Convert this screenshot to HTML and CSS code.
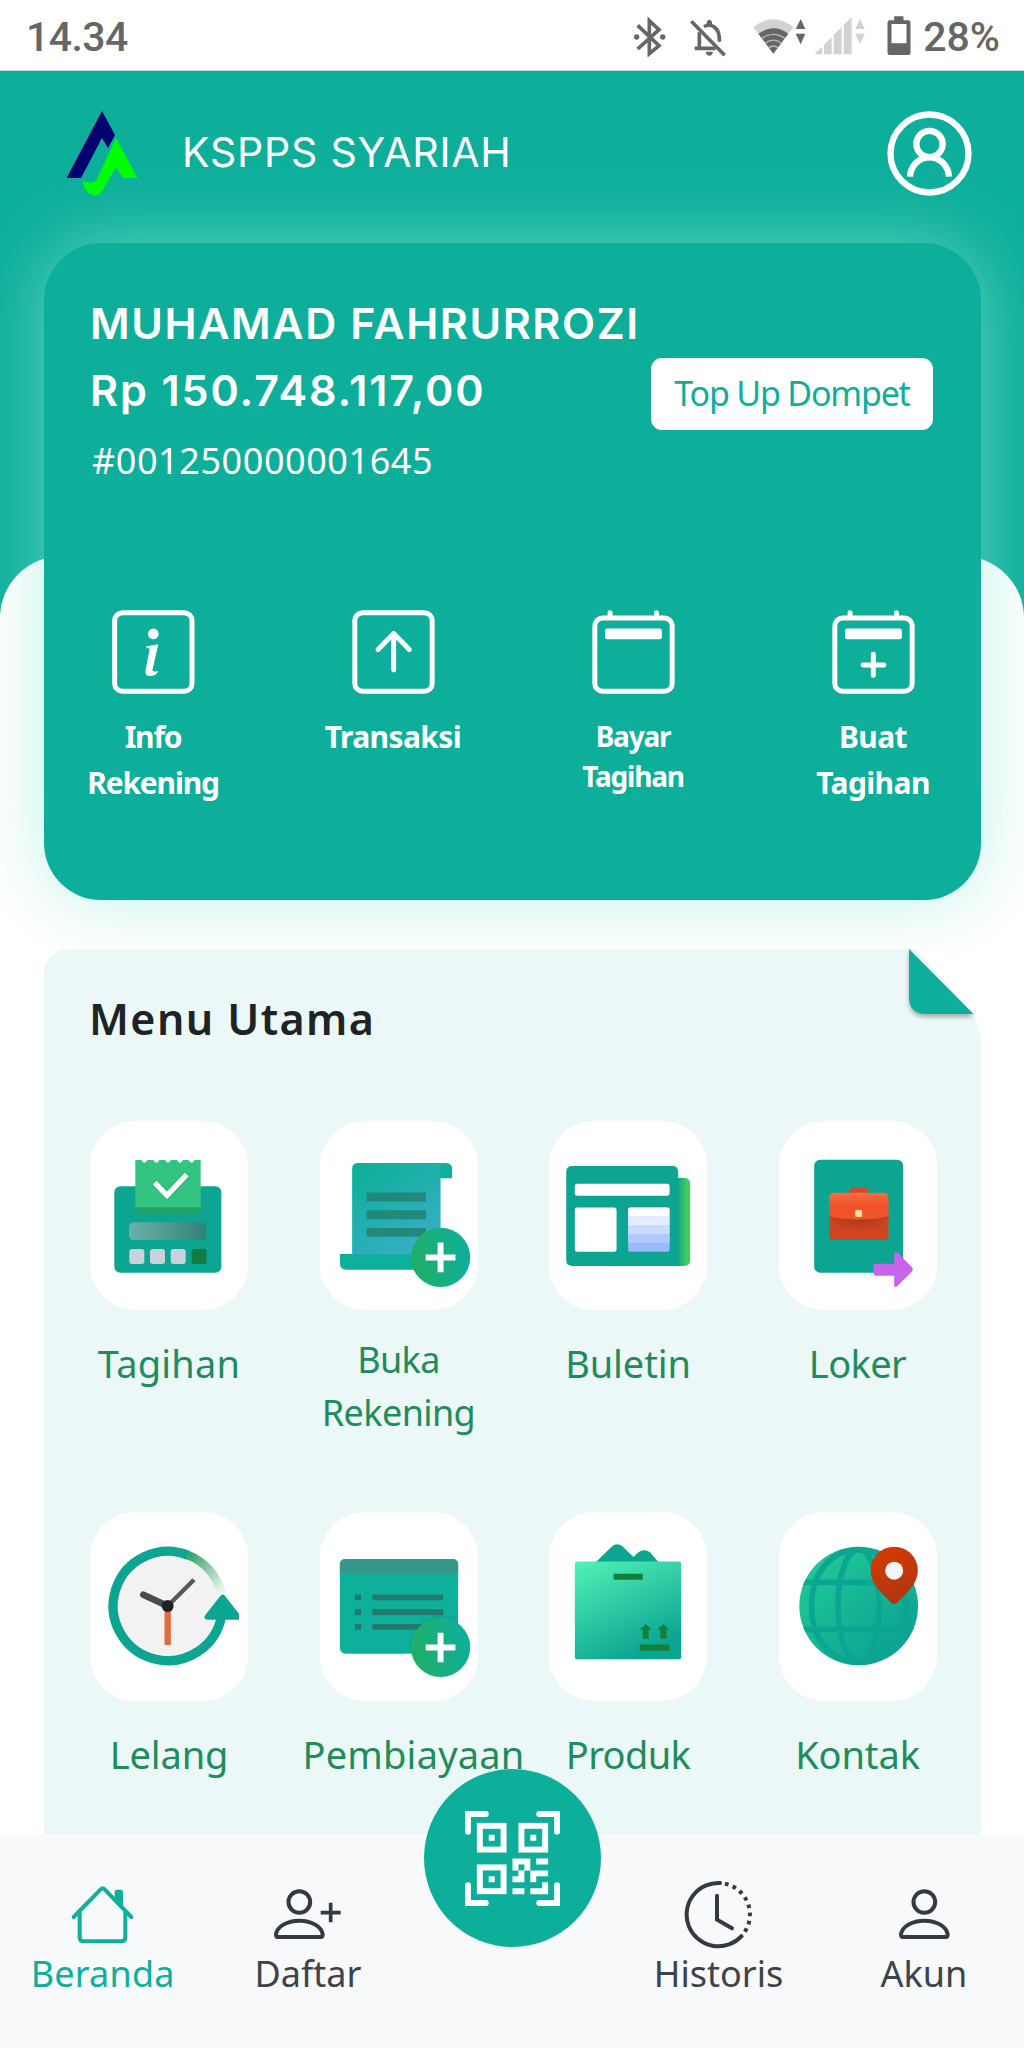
FILE: index.html
```html
<!DOCTYPE html>
<html lang="id">
<head>
<meta charset="utf-8">
<title>KSPPS Syariah</title>
<link rel="stylesheet" href="styles.css">
</head>
<body>
<div class="app">
  <div class="statusbar">
    <span class="clock">14.34</span>
    <div class="status-icons">
      <svg class="i-bt" viewBox="102 45 99 123" fill="none" stroke="#666" stroke-width="11"><path d="M116 73L180 134L151 158V59L180 86L116 144"/><g fill="#666" stroke="none"><circle cx="113" cy="108" r="8"/><circle cx="191" cy="108" r="8"/></g></svg>
      <svg class="i-bell" viewBox="270 45 114 123"><g fill="none" stroke="#666" stroke-width="11"><path d="M277 61L377 163"/><path d="M301 94V142M287 142H350" /><path d="M315 77Q331 68 346 78Q361 90 361 112V122"/></g><path d="M323 72V62Q331 50 339 62V72ZM320 152H342Q340 164 331 164Q322 164 320 152Z" fill="#666"/></svg>
      <svg class="i-wifi" viewBox="462 45 159 123"><path d="M523 158L463 78Q523 32 583 78Z" fill="#d2d2d2"/><path d="M523 158L478 98Q523 66 568 98Z" fill="#666"/><path d="M488 112Q523 88 558 112M499 127Q523 108 547 127M509 140Q523 130 537 140" fill="none" stroke="#bbb" stroke-width="4"/><path d="M605 54L619 84H590ZM605 130L619 98H590Z" fill="#666"/></svg>
      <svg class="i-cell" viewBox="646 45 153 123" fill="#d2d2d2"><path d="M647 160L670 138V160ZM676 132L699 108V160H676ZM705 102L729 78V160H705ZM735 72L759 49V160H735ZM784 54L798 84H770ZM784 130L798 98H770Z"/></svg>
      <svg class="i-batt" viewBox="866 45 71 123"><path d="M887 46H915V58H929Q936 58 936 65V154Q936 162 929 162H874Q867 162 867 154V65Q867 58 874 58H887ZM879 69V127H924V69Z" fill="#666" fill-rule="evenodd"/></svg>
    </div>
    <span class="battery">28%</span>
  </div>

  <div class="backdrop"></div>

  <header class="header">
    <svg class="logo" viewBox="66 110 72 86"><path d="M102 111L115 135L108 148L102 138L81 178H66.600Z" fill="#000070"/><path d="M116 138L137.500 178H123L116 167L104 188Q100 195.500 95.500 195.500Q89 195.500 85 189L82.500 182H88Q94 184 97 179Z" fill="#00ff00"/></svg>
    <h1 class="brand">KSPPS SYARIAH</h1>
    <svg class="profile" viewBox="861 331 255 255" fill="none" stroke="#fff" stroke-width="19"><circle cx="988.500" cy="458.500" r="117"/><circle cx="988.500" cy="430" r="39.500"/><path d="M930 528C932 496 956 470 988.500 470S1045 496 1047 528"/></svg>
  </header>

  <section class="card">
    <div class="account">
      <div class="account-info">
        <div class="owner">MUHAMAD FAHRURROZI</div>
        <div class="balance">Rp 150.748.117,00</div>
        <div class="number">#001250000001645</div>
      </div>
      <button class="topup">Top Up Dompet</button>
    </div>
    <nav class="actions">
      <a class="action">
        <svg viewBox="153 90 249 253"><rect x="160.500" y="98" width="233" height="237" rx="24" fill="none" stroke="#fff" stroke-width="15"/><circle cx="277" cy="162" r="16" fill="#fff"/><path d="M256 199L292 193L274 272Q281 278 292 274Q286 290 264 289Q250 287 254 270L266 207Q262 204 256 205Z" fill="#fff"/></svg>
        <span>Info<br>Rekening</span>
      </a>
      <a class="action">
        <svg viewBox="873 90 249 253" fill="none" stroke="#fff" stroke-width="15"><rect x="881" y="98" width="233" height="237" rx="24"/><path d="M998 271V163M951 209L998 161L1045 209" stroke-linecap="round" stroke-linejoin="round"/></svg>
        <span class="snug">Transaksi</span>
      </a>
      <a class="action">
        <svg viewBox="155 90 249 253" fill="none" stroke="#fff" stroke-width="15"><rect x="163" y="114" width="233" height="221" rx="24"/><path d="M209 98V110M349 98V110" stroke-linecap="round"/><rect x="194" y="146" width="171" height="32" rx="6" fill="#fff" stroke="none"/></svg>
        <span class="small">Bayar<br>Tagihan</span>
      </a>
      <a class="action">
        <svg viewBox="876 90 249 253" fill="none" stroke="#fff" stroke-width="15"><rect x="884" y="114" width="233" height="221" rx="24"/><path d="M930 98V110M1070 98V110M1000 223V287M969 255.500H1032" stroke-linecap="round"/><rect x="915" y="146" width="171" height="32" rx="6" fill="#fff" stroke="none"/></svg>
        <span class="snug">Buat<br>Tagihan</span>
      </a>
    </nav>
  </section>

  <section class="menu">
    <svg class="fold" viewBox="900 940 90 110"><path class="cut" d="M908 940H990V1044H981.500Q981 1030 973 1014Z"/><path class="flap" d="M909 949L973.500 1014H926Q909 1014 909 997Z"/></svg>
    <h2 class="menu-title">Menu Utama</h2>
    <div class="grid">
      <a class="item">
        <svg class="tile" viewBox="90 93 474 567">
          <defs><linearGradient id="disp"><stop offset="0" stop-color="#6bb0a9"/><stop offset="1" stop-color="#2f8377"/></linearGradient></defs>
          <rect x="163" y="289" width="321" height="259" rx="18" fill="#0ca592"/>
          <path d="M226 352H422V371H226Z" fill="#21a366"/>
          <path d="M226 210H244Q253 226 262 210H280Q289 226 298 210H315Q324 226 333 210H351Q360 226 369 210H386Q395 226 404 210H422V352H226Z" fill="#33c481"/>
          <path d="M284 278L321 317L380 256" fill="none" stroke="#1d9e60" stroke-opacity=".3" stroke-width="24"/>
          <path d="M284 278L321 316L380 254" fill="none" stroke="#fff" stroke-width="16"/>
          <rect x="207" y="397" width="232" height="53" rx="14" fill="url(#disp)"/>
          <g fill="#c9d1da"><rect x="208" y="477" width="45" height="45" rx="8"/><rect x="270" y="477" width="45" height="45" rx="8"/><rect x="332" y="477" width="45" height="45" rx="8"/></g><rect x="395" y="477" width="45" height="45" rx="8" fill="#107c41"/>
        </svg>
        <span class="wide">Tagihan</span>
      </a>
      <a class="item">
        <svg class="tile" viewBox="776 93 477 567">
          <defs><linearGradient id="scroll" x1="0" y1="0" x2=".7" y2="1"><stop offset=".1" stop-color="#0eb09b"/><stop offset="1" stop-color="#38aec6"/></linearGradient><linearGradient id="plus" x1="0" y1=".6" x2="1" y2=".4"><stop offset="0" stop-color="#21ae67"/><stop offset="1" stop-color="#0dae9b"/></linearGradient></defs>
          <path d="M1130 218H1157Q1175 218 1175 238V264H1130ZM836 493H1140V540H856Q836 540 836 520Z" fill="#0db09b"/>
          <path d="M873 236Q873 218 891 218H1150Q1140 224 1140 240V494H873Z" fill="url(#scroll)"/>
          <path d="M917 307H1096V334H917ZM917 361H1096V388H917ZM917 414H1096V441H917Z" fill="#21887a"/>
          <circle cx="1140" cy="503" r="89.500" fill="url(#plus)"/>
          <path d="M1140 458V548M1095 503H1185" stroke="#fff" stroke-width="18"/>
        </svg>
        <span class="two-line">Buka<br>Rekening</span>
      </a>
      <a class="item">
        <svg class="tile" viewBox="83 93 477 567">
          <defs><linearGradient id="page"><stop offset=".15" stop-color="#0ca592"/><stop offset=".8" stop-color="#42cc5c"/></linearGradient></defs>
          <path d="M462 263H491Q509 263 509 281V511Q509 529 491 529H462Z" fill="url(#page)"/>
          <path d="M153 227H455Q473 227 473 245V529H153Q135 529 135 511V245Q135 227 153 227Z" fill="#0ca592"/>
          <rect x="161" y="281" width="286" height="36" rx="7" fill="#fff"/><rect x="161" y="352" width="126" height="134" rx="7" fill="#fff"/><rect x="322" y="352" width="125" height="134" rx="6" fill="#9bb9ff"/>
          <path d="M322 432H447V459H322Z" fill="#b2c9ff"/><path d="M322 405H447V432H322Z" fill="#cbdbff"/><path d="M322 379H447V405H322Z" fill="#e6ecff"/><path d="M328 352H441Q447 352 447 358V379H322V358Q322 352 328 352Z" fill="#fff"/>
        </svg>
        <span>Buletin</span>
      </a>
      <a class="item">
        <svg class="tile" viewBox="775 93 473 567">
          <defs><linearGradient id="bag" x1="0" y1="0" x2="0" y2="1"><stop offset="0" stop-color="#f76d45"/><stop offset=".5" stop-color="#f0532a"/></linearGradient><radialGradient id="bagshade" cx=".5" cy=".1" r=".6"><stop offset="0" stop-color="#a7371a"/><stop offset="1" stop-color="#cf4522"/></radialGradient></defs>
          <rect x="880" y="209" width="267" height="339" rx="18" fill="#0ca592"/>
          <path d="M987 310V300Q987 293 994 293H1034Q1041 293 1041 300V310Z" fill="#d54b28"/>
          <path d="M925 370H1103V440Q1103 450 1093 450H935Q925 450 925 440Z" fill="url(#bagshade)"/>
          <path d="M925 324Q925 308 941 308H1087Q1103 308 1103 324V379Q1060 389 1014 389Q968 389 925 379Z" fill="url(#bag)"/>
          <rect x="1003" y="360" width="21" height="21" rx="3" fill="#ffdf99"/>
          <path d="M1065 521H1120V491Q1121 484 1129 487L1172 530Q1180 538 1172 546L1129 589Q1121 594 1120 587V557H1065Q1058 557 1058 550V528Q1058 521 1065 521Z" fill="#c766eb"/>
        </svg>
        <span class="tight">Loker</span>
      </a>
      <a class="item">
        <svg class="tile" viewBox="90 65 474 567">
          <defs><linearGradient id="fade" x1="0" y1="0" x2=".9" y2="1"><stop offset="0" stop-color="#34a06a"/><stop offset="1" stop-color="#e8f3ee"/></linearGradient></defs>
          <circle cx="323" cy="347" r="152" fill="#f2f2f2"/>
          <path d="M385 195A164 164 0 0 1 484 308" fill="none" stroke="url(#fade)" stroke-width="26"/>
          <path d="M385 195A164 164 0 1 0 485 375" fill="none" stroke="#0ca592" stroke-width="28"/>
          <path d="M479 319Q488 306 497 319L537 370V388H442Q428 386 436 374Z" fill="#0ca592"/>
          <path d="M323 347V464" stroke="#e36a3f" stroke-width="19"/>
          <path d="M323 347L402 268" stroke="#55585e" stroke-width="13"/><path d="M323 347L250 313" stroke="#484b51" stroke-width="20" stroke-linecap="round"/><circle cx="323" cy="347" r="18" fill="#212121"/>
        </svg>
        <span>Lelang</span>
      </a>
      <a class="item">
        <svg class="tile" viewBox="776 65 477 567">
          <rect x="836" y="205" width="357" height="286" rx="17" fill="#0eb09b"/>
          <path d="M836 249V222Q836 205 853 205H1176Q1193 205 1193 222V249Z" fill="#35968a"/>
          <path d="M881 312H900V330H881ZM881 357H900V375H881ZM881 401H900V419H881ZM934 312H1148V330H934ZM934 357H1148V375H934ZM934 401H1100V419H934Z" fill="#217a6c"/>
          <circle cx="1140" cy="472" r="96" fill="#0b9080" opacity=".3"/><path d="M1036 491H1193V632H1036ZM1193 350H1250V632H1193Z" fill="#fff"/>
          <circle cx="1140" cy="472" r="89.500" fill="url(#plus)"/><path d="M1140 428V517M1095 472.500H1185" stroke="#fff" stroke-width="18"/>
        </svg>
        <span class="wide">Pembiayaan</span>
      </a>
      <a class="item">
        <svg class="tile" viewBox="83 65 477 567">
          <defs><linearGradient id="box" x1="0" y1="0" x2=".5" y2="1"><stop offset="0" stop-color="#53f2b6"/><stop offset="1" stop-color="#0ca592"/></linearGradient></defs>
          <path d="M224 215L272 168Q289 153 306 168L338 199L353 185Q371 172 388 185L414 215Z" fill="#0ca592"/>
          <rect x="161" y="213" width="321" height="295" rx="8" fill="url(#box)"/>
          <path d="M278 250H366V268H278ZM357 463H447V482H357ZM366 446V418H357L375 401L393 418H384V446ZM419 446V418H410L428 401L446 418H438V446Z" fill="#138038"/>
        </svg>
        <span class="tight">Produk</span>
      </a>
      <a class="item">
        <svg class="tile" viewBox="775 65 473 567">
          <defs><linearGradient id="globe" x1="0" y1="0" x2="1" y2="1"><stop offset=".1" stop-color="#20c997"/><stop offset=".8" stop-color="#0ca592"/></linearGradient><linearGradient id="pin" x1="0" y1="0" x2=".4" y2="1"><stop offset="0" stop-color="#da3b01"/><stop offset="1" stop-color="#b0360f"/></linearGradient><clipPath id="gc"><circle cx="1013.500" cy="347" r="178"/></clipPath></defs>
          <circle cx="1013.500" cy="347" r="178" fill="url(#globe)"/>
          <g clip-path="url(#gc)" fill="none" stroke="#0ca592" stroke-width="17"><path d="M836 276H1192M836 418H1192"/><ellipse cx="1013.500" cy="347" rx="62" ry="170"/><path d="M1013 178C920 180 872 260 872 347S920 514 1013 516C1106 514 1155 434 1155 347S1106 180 1013 178"/></g>
          <path d="M1120 169A71 71 0 0 1 1191 240C1191 280 1160 305 1129 337Q1120 345 1111 337C1080 305 1049 280 1049 240A71 71 0 0 1 1120 169Z" fill="url(#pin)"/><circle cx="1120" cy="241" r="27" fill="#f5f5f5"/>
        </svg>
        <span>Kontak</span>
      </a>
    </div>
  </section>

  <nav class="tabbar">
    <a class="tab active">
      <svg viewBox="207 384 200 213" fill="none" stroke="#0eb09b" stroke-width="12" stroke-linecap="round" stroke-linejoin="round"><path d="M221 501L302 418Q308 412 314 418L394 501M239 484V562Q239 574 251 574H364Q376 574 376 562V484"/><path d="M344 446V426Q344 419 351 419H362Q369 419 369 426V470Z" fill="#0eb09b" stroke="none"/></svg>
      <span>Beranda</span>
    </a>
    <a class="tab">
      <svg viewBox="820 384 210 213" fill="none" stroke="#343a40" stroke-width="12"><circle cx="899" cy="456" r="32.500"/><path d="M834 561Q829 561 829 553C832 530 862 512 899 512S966 530 969 553Q969 561 964 561Z"/><path d="M993 458V517M963 488H1023" stroke-width="11"/></svg>
      <span>Daftar</span>
    </a>
    <a class="tab"></a>
    <a class="tab">
      <svg viewBox="-106 -110 212 213" fill="none" stroke="#343a40" stroke-width="12"><path d="M5 -95A95 95 0 1 0 69 65" stroke-linecap="round"/><path d="M5 -95A95 95 0 0 1 69 65" stroke-dasharray="11 13.500" stroke-dashoffset="-15"/><path d="M-4 -57V15L41 41" stroke-linecap="round"/></svg>
      <span>Historis</span>
    </a>
    <a class="tab">
      <svg viewBox="793 384 212 213" fill="none" stroke="#343a40" stroke-width="12"><circle cx="899" cy="456" r="32.500"/><path d="M834 561Q829 561 829 553C832 530 862 512 899 512S966 530 969 553Q969 561 964 561Z"/></svg>
      <span>Akun</span>
    </a>
    <button class="scan" aria-label="QR">
      <svg viewBox="0 0 32 32" fill="#fff"><path d="M1 7V1H7M25 1H31V7M31 25V31H25M7 31H1V25" fill="none" stroke="#fff" stroke-width="2" stroke-linecap="round"/><g fill="none" stroke="#fff" stroke-width="2"><rect x="5" y="5" width="8" height="8"/><rect x="19" y="5" width="8" height="8"/><rect x="5" y="19" width="8" height="8"/></g><path d="M8 8h2v2H8zM22 8h2v2h-2zM8 22h2v2H8zM16 16h6v4h6v2h-4v2h-2v-4h-2v4h-4v-2h2v-2h-2zM24 16h4v2h-4zM16 26h4v2h-4zM26 24h2v4h-6v-2h4z"/><path d="M18 18h2v2h-2z" fill="#0eb09b"/></svg>
    </button>
  </nav>
</div>
</body>
</html>
```
FILE: styles.css
```css
* { box-sizing: border-box; }
body { margin: 0; font-family: "Noto Sans", Lato, sans-serif; background: #fff; }
svg { display: block; flex: none; }
button { border: 0; font: inherit; }

.app { position: relative; width: 1024px; height: 2048px; overflow: hidden; display: flex; flex-direction: column; background: #0daf9b; }

.statusbar { flex: none; height: 71px; padding: 2px 24px 0 26px; background: #fff; border-bottom: 1px solid #c9d6d4; display: flex; align-items: center; color: #666; font: 500 41px/72px Roboto, sans-serif; }
.clock { letter-spacing: -.6px; margin-top: 1px; }
.battery { margin-top: 1px; }
.status-icons { flex: 1; display: flex; justify-content: flex-end; margin-right: 12px; }
.status-icons svg { height: 41px; }
.i-bt { width: 33px; margin-right: 23px; }
.i-bell { width: 38px; margin-right: 26px; }
.i-wifi { width: 53px; margin-right: 8px; }
.i-cell { width: 51px; margin-right: 22px; }
.i-batt { width: 24px; }

/* white sheet that starts behind the account card */
.backdrop { position: absolute; top: 556px; left: 0; right: 0; bottom: 0; border-radius: 62px 62px 0 0; background: #fff; }

.header { flex: none; height: 164px; padding: 0 52px 0 66px; display: flex; align-items: center; }
.logo { width: 72px; height: 86px; }
.brand { flex: 1; margin: -3px 0 0 44px; font-family: Inter, sans-serif; font-size: 41px; font-weight: 400; line-height: 60px; letter-spacing: .8px; color: #fff; }
.profile { width: 85px; height: 85px; }

.card { position: relative; flex: none; margin: 8px 43px 0 44px; height: 657px; padding-top: 47px; border-radius: 57px; background: #0daf9b; box-shadow: 0 0 70px rgba(148, 235, 215, .6); color: #fff; }
.account { display: flex; justify-content: space-between; align-items: flex-start; padding: 0 48px 0 46px; white-space: nowrap; }
.owner, .balance { font-family: Inter, sans-serif; font-size: 43px; font-weight: 600; line-height: 67px; }
.owner { letter-spacing: 1.6px; }
.balance { letter-spacing: 1.9px; }
.number { padding-left: 2px; font-size: 36px; line-height: 74px; letter-spacing: .56px; }
.topup { width: 282px; height: 72px; margin-top: 68px; margin-left: -40px; padding: 0 0 2px; border-radius: 11px; background: #fff; color: #0daf9b; font-size: 34px; letter-spacing: -1.2px; }

.actions { display: flex; justify-content: space-between; margin-top: 112px; padding: 0 39.500px 0 40.500px; }
.action { width: 137px; display: flex; flex-direction: column; align-items: center; text-align: center; }
.action svg { width: 83px; height: 84px; margin-bottom: 20px; }
.action span { font-size: 30px; font-weight: 700; line-height: 45.5px; letter-spacing: -1.2px; }
.action .snug { letter-spacing: -.6px; }
.action .small { margin-top: 2px; font-size: 28px; line-height: 40px; }

.menu { position: relative; flex: 1; min-height: 0; overflow: hidden; margin: 49px 43px 0 44px; padding: 40px 45px 0 46px; border-radius: 24px 0 0 0; background: #ebf8f7; }
.fold { position: absolute; top: -9px; right: -9px; width: 90px; height: 110px; }
.cut { fill: #fff; }
.flap { fill: #0daf9b; filter: drop-shadow(0 3px 2px rgba(0, 0, 0, .3)); }
.menu-title { margin: 0 0 72px -1px; font-size: 43px; font-weight: 600; line-height: 60px; letter-spacing: 1.4px; color: #202326; }
.grid { display: grid; grid-template-columns: repeat(4, 158px); column-gap: 71.500px; grid-auto-rows: 391px; }
.item { display: flex; flex-direction: column; text-align: center; color: #1f8c5b; }
.tile { width: 158px; height: 189px; border-radius: 45px; background: #fff; }
.item span { margin: 27px -17px 0; font-size: 38px; line-height: 52px; letter-spacing: -.1px; }
.item .wide { letter-spacing: .2px; }
.item .tight { letter-spacing: -.6px; }
.item .two-line { margin-top: 24px; font-size: 36px; line-height: 52.500px; letter-spacing: -.6px; }

.tabbar { position: relative; flex: none; height: 214px; display: grid; grid-template-columns: repeat(5, 205.300px); padding-top: 44px; background: #f8f9fb; }
.tab { display: flex; flex-direction: column; align-items: center; color: #3d4349; font-size: 36px; line-height: 50px; }
.tab svg { height: 71px; }
.active { color: #0daf9b; letter-spacing: .2px; }
.scan { position: absolute; left: 424px; top: -65px; width: 177px; height: 178px; padding: 0; border-radius: 50%; background: #0daf9b; display: flex; align-items: center; justify-content: center; }
.scan svg { width: 95px; height: 95px; }
```
